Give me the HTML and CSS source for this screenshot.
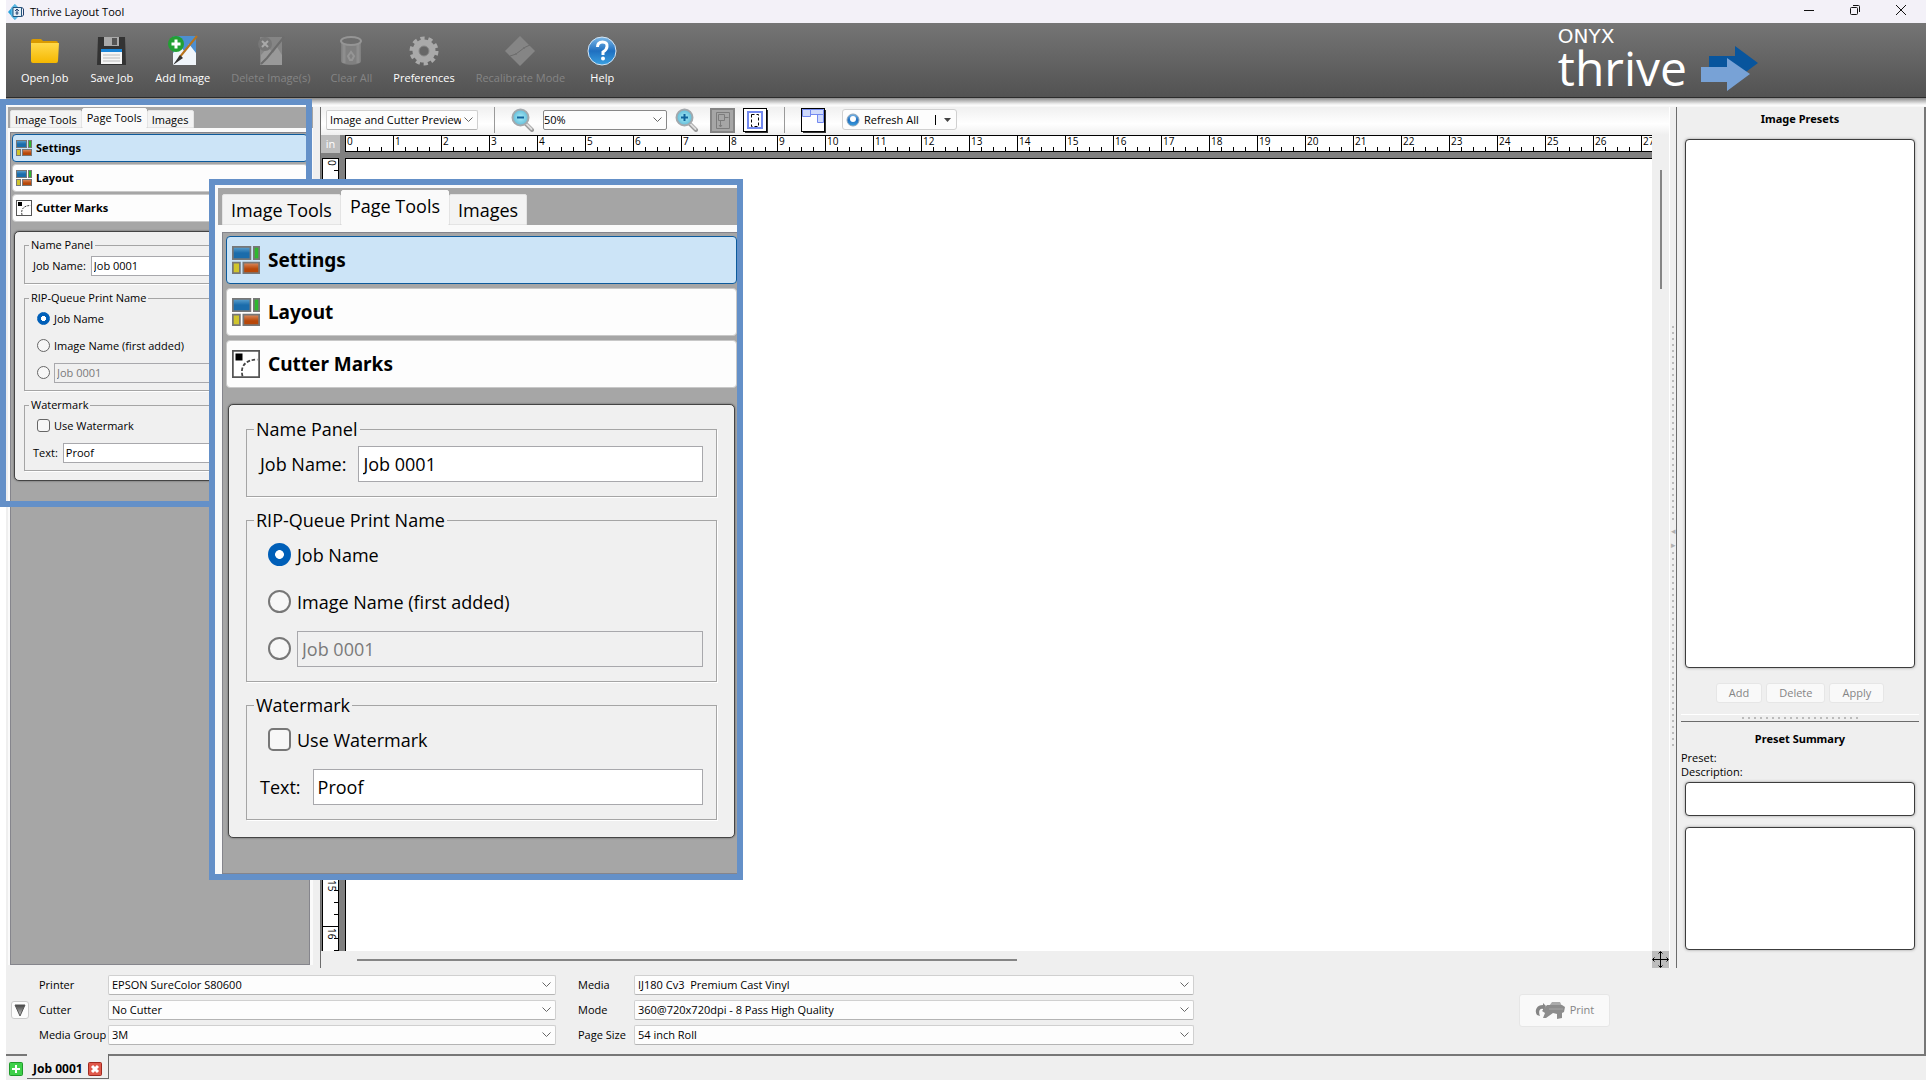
FILE: index.html
```
<!DOCTYPE html>
<html lang="en">
<head>
    <meta charset="UTF-8">
    <title>Thrive Layout Tool</title>
    <link rel="stylesheet" href="styles.css">
</head>
<body>
    <!-- shared icons -->
    <svg class="defs" aria-hidden="true">
        <defs>
            <linearGradient id="gYellow" x1="0" y1="0" x2="0" y2="1"><stop offset="0" stop-color="#ffd94a"/><stop offset="1" stop-color="#f5b800"/></linearGradient>
            <linearGradient id="gBlue" x1="0" y1="0" x2="0" y2="1"><stop offset="0" stop-color="#7db9e8"/><stop offset="0.5" stop-color="#1f6fc0"/><stop offset="1" stop-color="#3aa0e0"/></linearGradient>
            <linearGradient id="gTile" x1="0" y1="0" x2="0" y2="1"><stop offset="0" stop-color="#5fa3d0"/><stop offset="0.5" stop-color="#1b6cab"/></linearGradient>
            <linearGradient id="gRust" x1="0" y1="0" x2="0" y2="1"><stop offset="0" stop-color="#dc8d62"/><stop offset="0.6" stop-color="#b84708"/></linearGradient>
            <linearGradient id="gGrey" x1="0" y1="0" x2="0" y2="1"><stop offset="0" stop-color="#444"/><stop offset="1" stop-color="#ccc"/></linearGradient>
            <radialGradient id="gLens"><stop offset="0" stop-color="#a8ecf8"/><stop offset="1" stop-color="#62bcd8"/></radialGradient>
        </defs>
        <symbol id="tiles" viewBox="0 0 16 16">
            <rect x="0.5" y="0.5" width="10" height="7" fill="url(#gTile)" stroke="#777"/>
            <rect x="12.5" y="0.5" width="3" height="7" fill="#2eb82e" stroke="#777"/>
            <rect x="0.5" y="9.5" width="4" height="6" fill="#d0c52c" stroke="#777"/>
            <rect x="6.5" y="9.5" width="9" height="6" fill="url(#gRust)" stroke="#777"/>
        </symbol>
        <symbol id="marks" viewBox="0 0 16 16">
            <rect x="0.5" y="0.5" width="15" height="15" fill="#fff" stroke="#555"/>
            <rect x="2" y="2" width="4" height="4" fill="#000"/>
            <path d="M6 15C4.500 9 8 5.500 14.500 5.500" fill="none" stroke="#444" stroke-dasharray="2 1"/>
        </symbol>
        <symbol id="lens" viewBox="0 0 24 24">
            <path d="M14.500 15.500l6.500 6.500" stroke="#999" stroke-width="4" stroke-linecap="round"/>
            <path d="M15 15.500l5.500 5.500" stroke="#ddd" stroke-width="2" stroke-linecap="round"/>
            <circle cx="9.500" cy="9.500" r="8" fill="url(#gLens)" stroke="#a4a9ad" stroke-width="2"/>
        </symbol>
    </svg>

    <header class="titlebar">
        <svg width="16" height="16" viewBox="0 0 16 16"><path d="M7 0L0 8l7 8z" fill="#2aa4dc"/><path d="M7 0l3 3v10l-3 3-4-4V4z" fill="#58b8e4"/><path d="M5 3.500h8.500v9H5z" fill="#e4eef6" stroke="#23557e"/><path d="M9 11V5M7 7l2-2 2 2M7.500 9h3M13.500 3l2 2v6l-2 2" fill="none" stroke="#23406e"/></svg>
        <span>Thrive Layout Tool</span>
        <div class="window-buttons">
            <button type="button" aria-label="Minimize"><svg width="12" height="12"><path d="M1 6.500h10" stroke="#111"/></svg></button>
            <button type="button" aria-label="Restore"><svg width="12" height="12" fill="none" stroke="#111"><rect x="1.500" y="3.500" width="7" height="7" rx="1"/><path d="M4 1.500h5.500a1 1 0 0 1 1 1V8"/></svg></button>
            <button type="button" aria-label="Close"><svg width="12" height="12"><path d="M1 1l10 10M11 1L1 11" stroke="#111"/></svg></button>
        </div>
    </header>

    <nav class="toolbar">
        <button type="button">
            <svg width="32" height="32" viewBox="0 0 32 32"><path d="M2 6q0-2 2-2h8l2 2h13q2 0 2 2v4H2z" fill="#d99a00"/><path d="M2 8h28l-1 18q0 2-2 2H4q-2 0-2-2z" fill="url(#gYellow)"/></svg>
            Open Job
        </button>
        <button type="button">
            <svg width="32" height="32" viewBox="0 0 32 32"><path d="M2 2h27l1 28H1z" fill="#333"/><rect x="8" y="2" width="15" height="9" fill="#aaa"/><rect x="16" y="3" width="5" height="7" fill="#555"/><path d="M5 14h21v15H5z" fill="#f5f5f5"/><path d="M5 14h21v3H5z" fill="#1b86d8"/><path d="M7 20h17M7 23h17M7 26h17" stroke="#bbb"/></svg>
            Save Job
        </button>
        <button type="button">
            <svg width="32" height="32" viewBox="0 0 32 32"><rect x="6" y="1" width="23" height="29" fill="#4d8fd0"/><path d="M6 18l7-7 5 6 4-8 7 9v12H6z" fill="#f0f5fa"/><path d="M30 1L12 23" stroke="#b8741c" stroke-width="2"/><path d="M13 20l3 3-10 7z" fill="#333"/><circle cx="9" cy="9" r="8" fill="#22a033"/><path d="M9 4.500v9M4.500 9h9" stroke="#fff" stroke-width="3"/></svg>
            Add Image
        </button>
        <button type="button" disabled>
            <svg width="32" height="32" viewBox="0 0 32 32"><rect x="5" y="2" width="22" height="28" fill="#858585"/><path d="M6 20l7-8 5 6 4-6 5 8v10H6z" fill="#999"/><path d="M29 2L12 23l-6 6" fill="none" stroke="#6c6c6c" stroke-width="2"/><circle cx="10" cy="9" r="7" fill="#777"/><path d="M7 6l6 6M13 6l-6 6" stroke="#aaa" stroke-width="2"/></svg>
            Delete Image(s)
        </button>
        <button type="button" disabled>
            <svg width="32" height="32" viewBox="0 0 32 32"><path d="M6 6v20c0 5 20 5 20 0V6z" fill="#808080"/><path d="M9 9v19M23 9v19" stroke="#8e8e8e" stroke-width="3"/><ellipse cx="16" cy="6" rx="10" ry="4" fill="#6e6e6e" stroke="#959595" stroke-width="2"/><path d="M13 21l3-4 3 4-2 4h-2z" fill="none" stroke="#959595" stroke-width="2"/></svg>
            Clear All
        </button>
        <button type="button">
            <svg width="32" height="32" viewBox="0 0 32 32"><circle cx="16" cy="16" r="12" fill="none" stroke="#aaa" stroke-width="5" stroke-dasharray="4 3.540"/><circle cx="16" cy="16" r="8" fill="none" stroke="#a9a9a9" stroke-width="7"/><circle cx="16" cy="16" r="5" fill="#666" stroke="#888"/></svg>
            Preferences
        </button>
        <button type="button" disabled>
            <svg width="32" height="32" viewBox="0 0 32 32"><path d="M16 1l15 15-15 15L1 16z" fill="#858585"/><path d="M6 21q6-1 10-5t10-6" fill="none" stroke="#6b6b6b"/><circle cx="12" cy="19" r="1" fill="#707070"/><circle cx="20" cy="13" r="1" fill="#707070"/></svg>
            Recalibrate Mode
        </button>
        <button type="button">
            <svg width="32" height="32" viewBox="0 0 32 32"><circle cx="16" cy="16" r="14" fill="url(#gBlue)" stroke="#d5e6f5"/><path d="M11.500 12q0-5 5-5t4.500 4.500q0 3-4 5.500v3" fill="none" stroke="#fff" stroke-width="3"/><circle cx="17" cy="23.500" r="2" fill="#fff"/></svg>
            Help
        </button>
        <div class="brand">
            <div class="brand-name"><small>ONYX</small><span>thrive</span></div>
            <svg width="57" height="46" viewBox="0 0 57 46"><path d="M8 10h26V0l23 17-23 17V23H8z" fill="#08559d"/><path d="M0 21h26v-9l23 16-23 17v-9H0z" fill="#78a2d6"/></svg>
        </div>
    </nav>

    <main class="workspace">
        <aside class="side">
            <div class="tools">
                <div class="tabs">
                    <button type="button">Image Tools</button>
                    <button type="button" class="active">Page Tools</button>
                    <button type="button">Images</button>
                </div>
                <div class="tools-body">
                    <button type="button" class="section active"><svg><use href="#tiles"/></svg>Settings</button>
                    <button type="button" class="section"><svg><use href="#tiles"/></svg>Layout</button>
                    <button type="button" class="section"><svg><use href="#marks"/></svg>Cutter Marks</button>
                    <form class="panel">
                        <fieldset>
                            <legend>Name Panel</legend>
                            <div class="row"><label for="jobName">Job Name:</label><input type="text" id="jobName" value="Job 0001"></div>
                        </fieldset>
                        <fieldset>
                            <legend>RIP-Queue Print Name</legend>
                            <div class="row choice"><input type="radio" name="rip" id="ripJob" checked><label for="ripJob">Job Name</label></div>
                            <div class="row choice"><input type="radio" name="rip" id="ripImage"><label for="ripImage">Image Name (first added)</label></div>
                            <div class="row choice"><input type="radio" name="rip" aria-label="Custom name"><input type="text" value="Job 0001" aria-label="Custom print name" disabled></div>
                        </fieldset>
                        <fieldset>
                            <legend>Watermark</legend>
                            <div class="row choice"><input type="checkbox" id="useMark"><label for="useMark">Use Watermark</label></div>
                            <div class="row"><label for="markText">Text:</label><input type="text" id="markText" value="Proof"></div>
                        </fieldset>
                    </form>
                </div>
            </div>
        </aside>

        <section class="preview">
            <div class="preview-bar">
                <select class="mode-select" aria-label="Preview mode"><option>Image and Cutter Preview</option></select>
                <span class="sep"></span>
                <button type="button" class="icon-btn" aria-label="Zoom out"><svg width="24" height="24"><use href="#lens"/><path d="M6 9.500h7" stroke="#10639c" stroke-width="2"/></svg></button>
                <select class="zoom-select" aria-label="Zoom"><option>50%</option></select>
                <button type="button" class="icon-btn" aria-label="Zoom in"><svg width="24" height="24"><use href="#lens"/><path d="M6 9.500h7M9.500 6v7" stroke="#10639c" stroke-width="2"/></svg></button>
                <button type="button" class="icon-btn" aria-label="Fit image" disabled><svg width="25" height="25"><rect x="1" y="1" width="23" height="23" fill="#a6a6a6" stroke="#858585" stroke-width="2"/><path d="M6.500 4.500h13v16h-13zM8.500 6.500h6v6h-6zM14.500 9.500h4M10.500 12.500v6M9 17l1.500 2 1.500-2" fill="none" stroke="#7c7c7c"/></svg></button>
                <button type="button" class="icon-btn" aria-label="Fit page"><svg width="25" height="25"><path d="M2 2h23v23H2z" fill="#333"/><rect x="0.500" y="0.500" width="23" height="23" fill="#fff" stroke="#000"/><rect x="5" y="4" width="14" height="16" fill="#fff" stroke="#7389f0" stroke-width="2"/><rect x="8.500" y="6.500" width="7" height="12" fill="none" stroke="#000" stroke-dasharray="3 2"/></svg></button>
                <span class="sep"></span>
                <button type="button" class="icon-btn" aria-label="Nest"><svg width="25" height="25"><path d="M2 2h23v23H2z" fill="#333"/><rect x="0.500" y="0.500" width="23" height="23" fill="#fff" stroke="#000"/><path d="M1.500 1.500h8v7h-8zM9.500 1.500h13v5h-13zM16.500 6.500h6v8h-6z" fill="#cfdafb" stroke="#7389f0"/></svg></button>
                <button type="button" class="refresh">
                    <svg width="14" height="14"><circle cx="7" cy="7" r="6" fill="url(#gBlue)" stroke="#8ba4ba"/><circle cx="7" cy="6" r="3" fill="#fff"/></svg>
                    Refresh All
                    <svg class="drop" width="18" height="12"><path d="M0.500 1v10" stroke="#000"/><path d="M9 4h7l-3.500 4z" fill="#444"/></svg>
                </button>
            </div>
            <div class="stage">
                <div class="corner"><span>in</span></div>
                <div class="ruler ruler-x" id="rulerX"></div>
                <div class="vscroll"><i></i></div>
                <div class="ruler ruler-y" id="rulerY"></div>
                <div class="canvas"></div>
                <div class="hscroll"><i></i></div>
                <svg class="pan" width="17" height="17"><rect width="17" height="17" fill="#bdbdbd"/><path d="M8.500 1v15M1 8.500h15M6.500 2.500l2-2 2 2M6.500 14.500l2 2 2-2M2.500 6.500l-2 2 2 2M14.500 6.500l2 2-2 2" fill="none" stroke="#000"/></svg>
            </div>
        </section>

        <div class="splitter"><span></span><i>&#9666;</i><i>&#9656;</i><span></span></div>

        <aside class="presets">
            <h2>Image Presets</h2>
            <div class="box list"></div>
            <div class="preset-buttons">
                <button type="button" disabled>Add</button>
                <button type="button" disabled>Delete</button>
                <button type="button" disabled>Apply</button>
            </div>
            <div class="hsplit"><span></span></div>
            <h2>Preset Summary</h2>
            <p>Preset:</p>
            <p>Description:</p>
            <div class="box description"></div>
            <div class="box details"></div>
        </aside>
    </main>

    <form class="settings">
        <button type="button" class="collapse" aria-label="Collapse"><svg width="12" height="13"><path d="M1 1h10L6 12z" fill="url(#gGrey)" stroke="#555"/></svg></button>
        <label for="printer">Printer</label>
        <select id="printer"><option>EPSON SureColor S80600</option></select>
        <label for="media" class="second">Media</label>
        <select id="media"><option>IJ180 Cv3&nbsp; Premium Cast Vinyl</option></select>
        <button type="button" class="print" disabled>
            <svg width="32" height="18" viewBox="0 0 32 18"><path d="M18 1h8l2 4H15z" fill="#aaa"/><path d="M13 4h15l3 2-1 5-2 1v5l-5 1v-5l-4-1-7 5H9l2-5-3-2z" fill="#8c8c8c"/><path d="M12 5L9 2v2C3 4 0 9 3 14l3 1c-2-5 0-8 3-7v2z" fill="#858585"/><path d="M15 8h14" stroke="#a5a5a5"/></svg>
            Print
        </button>
        <label for="cutter">Cutter</label>
        <select id="cutter"><option>No Cutter</option></select>
        <label for="mode" class="second">Mode</label>
        <select id="mode"><option>360@720x720dpi - 8 Pass High Quality</option></select>
        <label for="mediaGroup">Media Group</label>
        <select id="mediaGroup"><option>3M</option></select>
        <label for="pageSize" class="second">Page Size</label>
        <select id="pageSize"><option>54 inch Roll</option></select>
    </form>

    <footer class="jobs">
        <button type="button" class="mini" aria-label="New job"><svg width="14" height="14"><rect x="0.500" y="0.500" width="13" height="13" rx="1" fill="#3fd04a" stroke="#1f9a2b"/><path d="M7 3v8M3 7h8" stroke="#fff" stroke-width="2"/></svg></button>
        <div class="job-tab">
            <a href="#">Job 0001</a>
            <button type="button" class="mini" aria-label="Close job"><svg width="14" height="14"><rect x="0.500" y="0.500" width="13" height="13" rx="1" fill="#e0584a" stroke="#a12a20"/><path d="M4 4l6 6M10 4l-6 6" stroke="#fff" stroke-width="3"/></svg></button>
        </div>
    </footer>

    <!-- highlighted area and its magnified copy -->
    <div class="highlight"></div>
    <div class="callout">
        <div class="tools large">
            <div class="tabs">
                <button type="button">Image Tools</button>
                <button type="button" class="active">Page Tools</button>
                <button type="button">Images</button>
            </div>
            <div class="tools-body">
                <button type="button" class="section active"><svg><use href="#tiles"/></svg>Settings</button>
                <button type="button" class="section"><svg><use href="#tiles"/></svg>Layout</button>
                <button type="button" class="section"><svg><use href="#marks"/></svg>Cutter Marks</button>
                <form class="panel">
                    <fieldset>
                        <legend>Name Panel</legend>
                        <div class="row"><label for="bigJobName">Job Name:</label><input type="text" id="bigJobName" value="Job 0001"></div>
                    </fieldset>
                    <fieldset>
                        <legend>RIP-Queue Print Name</legend>
                        <div class="row choice"><input type="radio" name="bigRip" id="bigRipJob" checked><label for="bigRipJob">Job Name</label></div>
                        <div class="row choice"><input type="radio" name="bigRip" id="bigRipImage"><label for="bigRipImage">Image Name (first added)</label></div>
                        <div class="row choice"><input type="radio" name="bigRip" aria-label="Custom name"><input type="text" value="Job 0001" aria-label="Custom print name" disabled></div>
                    </fieldset>
                    <fieldset>
                        <legend>Watermark</legend>
                        <div class="row choice"><input type="checkbox" id="bigUseMark"><label for="bigUseMark">Use Watermark</label></div>
                        <div class="row"><label for="bigMarkText">Text:</label><input type="text" id="bigMarkText" value="Proof"></div>
                    </fieldset>
                </form>
            </div>
        </div>
    </div>

    <script>
        // Fill a ruler with one numbered cell per inch (48px)
        function fillRuler(id, vertical) {
            const ruler = document.getElementById(id);
            const size = vertical ? ruler.clientHeight : ruler.clientWidth;
            const inches = Math.ceil(size / 48);
            for (let i = 0; i < inches; i++) {
                const cell = document.createElement('span');
                cell.textContent = i;
                ruler.appendChild(cell);
            }
        }

        fillRuler('rulerX', false);
        fillRuler('rulerY', true);
    </script>
</body>
</html>
```
FILE: styles.css
```
* {
    box-sizing: border-box;
}
body {
    margin: 0;
    padding-left: 6px;
    height: 100vh;
    display: flex;
    flex-direction: column;
    position: relative;
    overflow: hidden;
    background: #fff;
    color: #000;
    font: 11px/14px "Open Sans", "Noto Sans", sans-serif;
}
button, input, select {
    font: inherit;
    color: inherit;
    margin: 0;
}
button {
    background: none;
    border: 0;
    padding: 0;
}
h2, p {
    margin: 0;
}
.defs {
    position: absolute;
    width: 0;
    height: 0;
}

/* title bar */
.titlebar {
    height: 23px;
    flex: none;
    display: flex;
    align-items: center;
    gap: 6px;
    padding: 0 2px;
    background: #f3f1f8;
}
.window-buttons {
    margin-left: auto;
    display: flex;
}
.window-buttons button {
    width: 46px;
    height: 20px;
}

/* main toolbar */
.toolbar {
    height: 75px;
    flex: none;
    display: flex;
    padding-left: 4px;
    background: linear-gradient(#757575, #525252);
    border-bottom: 1px solid #2c2c2c;
    color: #fff;
}
.toolbar button {
    display: flex;
    flex-direction: column;
    align-items: center;
    gap: 4px;
    padding: 12px 11px 0;
}
.toolbar button:disabled {
    padding: 12px 10px 0;
    color: #858585;
}
.brand {
    margin-left: auto;
    margin-right: 168px;
    display: flex;
    align-items: flex-end;
    gap: 14px;
    padding-bottom: 5px;
}
.brand-name {
    display: flex;
    flex-direction: column;
}
.brand-name small {
    font: 20px/16px "DejaVu Sans", sans-serif;
}
.brand-name span {
    font-size: 48px;
    line-height: 48px;
}

/* workspace */
.workspace {
    flex: 1;
    min-height: 0;
    display: flex;
    padding-top: 9px;
    background: linear-gradient(#8a8a8a, #efefef 6px, #fff 8px, #efefef 9px);
}
.side {
    width: 314px;
    flex: none;
    padding: 0 7px 3px 2px;
    display: flex;
}

/* page tools, drawn in two sizes */
.tools {
    --tab-bar: 21px;
    --tab: 18px;
    --strip: 4px;
    --inset: 2px;
    --section: 28px;
    --icon: 16px;
    --legend: 14px;
    --row: 27px;
    --field: 20px;
    --tick: 13px;
    --gap: 7px;
    --pad: 9px;
    --label-gap: 5px;
    flex: 1;
    min-width: 0;
    display: flex;
    flex-direction: column;
    background: #fafafa;
}
.large {
    --tab-bar: 37px;
    --tab: 31px;
    --strip: 7px;
    --inset: 4px;
    --section: 48px;
    --icon: 28px;
    --legend: 22px;
    --row: 47px;
    --field: 36px;
    --tick: 23px;
    --gap: 12px;
    --pad: 17px;
    --label-gap: 12px;
    font-size: 18px;
    line-height: 24px;
}
.tabs {
    height: var(--tab-bar);
    flex: none;
    display: flex;
    align-items: flex-end;
    padding-left: var(--inset);
    background: #a5a5a5;
}
.tabs button {
    height: var(--tab);
    padding: 1px calc(var(--inset) * 2) 0;
    background: #f3f3f3;
    border: 1px solid #e4e4e4;
    border-radius: 2px 2px 0 0;
}
.tabs .active {
    height: calc(var(--tab) + var(--inset));
    padding-bottom: var(--inset);
    background: #fafafa;
    border-color: #fafafa;
}
.tools-body {
    flex: 1;
    margin: var(--strip) 0 0 var(--inset);
    padding: calc(var(--inset) - 1px);
    display: flex;
    flex-direction: column;
    gap: var(--inset);
    background: #a6a6a6;
    border: 1px solid #85858c;
}
.side .tools-body {
    margin-right: 3px;
}
.large .tools-body {
    padding-right: 0;
    border-right: 0;
}
.section {
    height: var(--section);
    flex: none;
    display: flex;
    align-items: center;
    gap: var(--inset);
    padding: 0 calc(var(--inset) + 1px);
    background: #fdfdfd;
    border: 1px solid #c8c8c8;
    border-radius: 4px;
    font-family: "Noto Sans", sans-serif;
    font-weight: bold;
}
.large .section {
    font-size: 19px;
}
.section.active {
    background: #cce4f7;
    border-color: #0c5a9c;
}
.section svg {
    width: var(--icon);
    height: var(--icon);
    margin-right: var(--inset);
}
.panel {
    margin: var(--gap) 2px 0;
    padding: calc(var(--gap) - 1px) var(--pad) var(--pad);
    display: flex;
    flex-direction: column;
    gap: var(--gap);
    background: #f0f0f0;
    border: 1px solid #444;
    border-radius: 5px;
    box-shadow: 0 0 2px #555;
}
.large .panel {
    padding-top: 13px;
}
fieldset {
    margin: 0;
    min-width: 0;
    padding: 0 calc(var(--gap) + 1px) calc(var(--gap) - 3px);
    border: 1px solid #a5a5a5;
    box-shadow: 1px 1px #fff;
}
legend {
    margin-left: calc(var(--inset) * -1 - 2px);
    padding: 0 2px;
    line-height: var(--legend);
}
.row {
    height: var(--row);
    display: flex;
    align-items: center;
    gap: var(--label-gap);
}
.choice {
    gap: calc(var(--inset) + 2px);
    padding-left: calc(var(--inset) * 2);
}
input[type="text"] {
    flex: 1;
    min-width: 0;
    height: var(--field);
    padding: 0 var(--inset);
    border: 1px solid #a8a8ac;
    background: #fff;
}
input[type="text"]:disabled {
    background: #f0f0f0;
    color: #7a7a7a;
}
input[type="radio"], input[type="checkbox"] {
    appearance: none;
    flex: none;
    width: var(--tick);
    height: var(--tick);
    border: 1px solid #666;
    background: #f7f7f7;
    border-radius: 50%;
}
input[type="checkbox"] {
    border-radius: 3px;
}
.large input[type="radio"], .large input[type="checkbox"] {
    border-width: 2px;
    border-color: #777;
}
.large input[type="checkbox"] {
    border-radius: 5px;
}
input[type="radio"]:checked, .large input[type="radio"]:checked {
    border-color: #005fb8;
    background: radial-gradient(#fff 30%, #005fb8 35%);
}

/* preview */
.preview {
    flex: 1;
    min-width: 0;
    display: flex;
    flex-direction: column;
    border-left: 1px solid #6c6c6c;
}
.preview-bar {
    height: 28px;
    flex: none;
    display: flex;
    align-items: flex-start;
    gap: 8px;
    padding-left: 5px;
    background: linear-gradient(#f0f0f0, #fff 60%, #efefef);
}
select {
    appearance: none;
    height: 20px;
    padding: 0 16px 0 3px;
    border: 1px solid #d0d0d0;
    border-bottom-color: #b4b4b4;
    border-radius: 2px;
    background: #fdfdfd url("data:image/svg+xml,%3Csvg xmlns='http://www.w3.org/2000/svg' width='9' height='6'%3E%3Cpath d='M.5 .5l4 4 4-4' fill='none' stroke='%23666'/%3E%3C/svg%3E") no-repeat right 4px center;
}
.preview-bar select {
    margin-top: 3px;
}
.mode-select {
    width: 152px;
}
.zoom-select {
    width: 124px;
    padding-left: 0;
    border-color: #888;
}
.sep {
    width: 1px;
    height: 26px;
    margin: 0 8px;
    background: #999;
}
.icon-btn {
    display: flex;
    align-items: center;
    height: 26px;
}
.icon-btn:disabled {
    margin-left: 3px;
}
.refresh {
    height: 21px;
    margin: 2px 0 0 8px;
    padding: 0 3px;
    display: flex;
    align-items: center;
    gap: 4px;
    background: #fdfdfd;
    border: 1px solid #d0d0d0;
    border-radius: 3px;
}
.drop {
    margin-left: 12px;
}
.stage {
    flex: 1;
    min-height: 0;
    display: grid;
    grid-template-columns: 24px minmax(0, 1fr) 17px;
    grid-template-rows: 23px minmax(0, 1fr) 17px;
    background: #efefef;
}
.corner {
    background: #808080;
}
.corner span {
    display: block;
    width: 19px;
    height: 18px;
    line-height: 18px;
    text-align: center;
    background: #bdbdbd;
    color: #fff;
}
.ruler {
    display: flex;
    overflow: hidden;
    background: #808080;
    font-size: 10px;
    line-height: 11px;
}
.ruler span {
    flex: none;
    border: 1px solid #000;
    background-color: #fff;
}
.ruler-x span {
    width: 48px;
    height: 17px;
    padding-left: 1px;
    border-right: 0;
    background-image: linear-gradient(#000, #000), linear-gradient(#000, #000), linear-gradient(#000, #000);
    background-size: 1px 4px;
    background-repeat: no-repeat;
    background-position: 11px 100%, 23px 100%, 35px 100%;
}
.ruler-y {
    flex-direction: column;
}
.ruler-y span {
    width: 17px;
    height: 48px;
    margin-left: 1px;
    padding-top: 1px;
    writing-mode: vertical-rl;
    border-bottom: 0;
    line-height: 12px;
    background-image: linear-gradient(#000, #000), linear-gradient(#000, #000), linear-gradient(#000, #000);
    background-size: 4px 1px;
    background-repeat: no-repeat;
    background-position: 100% 11px, 100% 23px, 100% 35px;
}
.canvas {
    background: #fff;
    border-top: 1px solid #000;
    border-left: 1px solid #000;
}
.vscroll {
    grid-column: 3;
    grid-row: 1 / 3;
    display: flex;
    justify-content: center;
    padding-top: 35px;
}
.vscroll i {
    width: 2px;
    height: 119px;
    background: #858585;
}
.hscroll {
    grid-column: 1 / 3;
    display: flex;
    align-items: center;
    padding-left: 36px;
}
.hscroll i {
    width: 51%;
    height: 2px;
    background: #858585;
}

.splitter {
    width: 7px;
    flex: none;
    display: flex;
    flex-direction: column;
    align-items: center;
    justify-content: center;
    border-left: 1px solid #fff;
    color: #b0b0b0;
    font-size: 9px;
}
.splitter span {
    width: 2px;
    height: 198px;
    background: repeating-linear-gradient(#bbb 0 2px, #efefef 2px 6px);
}
.splitter i {
    font-style: normal;
}

/* presets */
.presets {
    width: 250px;
    flex: none;
    display: flex;
    flex-direction: column;
    padding: 5px 5px 18px 4px;
    border-left: 1px solid #6c6c6c;
    border-right: 2px solid #777;
}
.presets h2 {
    font: bold 11px/14px "Noto Sans", sans-serif;
    text-align: center;
}
.box {
    margin: 0 4px;
    background: #fff;
    border: 1px solid #3c3c3c;
    border-radius: 4px;
    box-shadow: 0 0 3px #999;
}
.list {
    flex: 1;
    margin-top: 13px;
}
.preset-buttons {
    display: flex;
    justify-content: center;
    gap: 4px;
    margin: 15px 0 11px;
}
.preset-buttons button {
    height: 20px;
    padding: 0 12px;
}
.preset-buttons button, .print {
    background: #f9f9f9;
    border: 1px solid #e6e6e6;
    border-radius: 3px;
    color: #858585;
}
.hsplit {
    height: 8px;
    margin-bottom: 10px;
    border-top: 1px solid #fff;
    border-bottom: 1px solid #6c6c6c;
}
.hsplit span {
    display: block;
    width: 116px;
    height: 2px;
    margin: 2px auto;
    background: repeating-linear-gradient(90deg, #bbb 0 2px, #efefef 2px 6px);
}
.presets h2 + p {
    margin-top: 5px;
}
.description {
    height: 34px;
    margin-top: 3px;
}
.details {
    height: 123px;
    margin-top: 11px;
}

/* print settings */
.settings {
    flex: none;
    display: grid;
    grid-template-columns: 18px 59px 448fr 58px 560fr 720fr;
    gap: 5px 10px;
    align-items: center;
    padding: 7px 0 9px 5px;
    background: #efefef;
    border-right: 2px solid #777;
    border-bottom: 2px solid #777;
}
.settings label {
    white-space: nowrap;
}
.settings .second {
    padding-left: 12px;
}
.collapse {
    grid-row: 1 / 4;
    width: 18px;
    height: 18px;
    display: grid;
    place-items: center;
    background: #fdfdfd;
    border: 1px solid #ccc;
    border-radius: 3px;
}
.print {
    grid-column: 6;
    grid-row: 1 / 4;
    justify-self: center;
    width: 91px;
    height: 33px;
    display: flex;
    align-items: center;
    justify-content: center;
    gap: 4px;
}

/* job tabs */
.jobs {
    height: 24px;
    flex: none;
    display: flex;
    align-items: flex-start;
    gap: 4px;
    padding-left: 3px;
    background: #efefef;
}
.mini {
    display: flex;
}
.jobs > .mini {
    margin-top: 6px;
}
.job-tab {
    height: 25px;
    margin-top: -2px;
    padding: 5px 6px 0;
    display: flex;
    align-items: center;
    gap: 5px;
    background: #efefef;
    border-right: 1px solid #6c6c6c;
    border-bottom: 1px solid #6c6c6c;
}
.job-tab a {
    color: inherit;
    font-family: "Noto Sans", sans-serif;
    font-size: 12px;
    font-weight: bold;
    text-decoration: none;
}

/* overlays */
.highlight {
    position: absolute;
    left: 0;
    top: 99px;
    width: 312px;
    height: 408px;
    border: 6px solid #6490c8;
}
.callout {
    position: absolute;
    left: 209px;
    top: 179px;
    width: 534px;
    height: 701px;
    padding: 3px 0 0 3px;
    display: flex;
    background: #fafafa;
    border: 6px solid #6490c8;
}
```
